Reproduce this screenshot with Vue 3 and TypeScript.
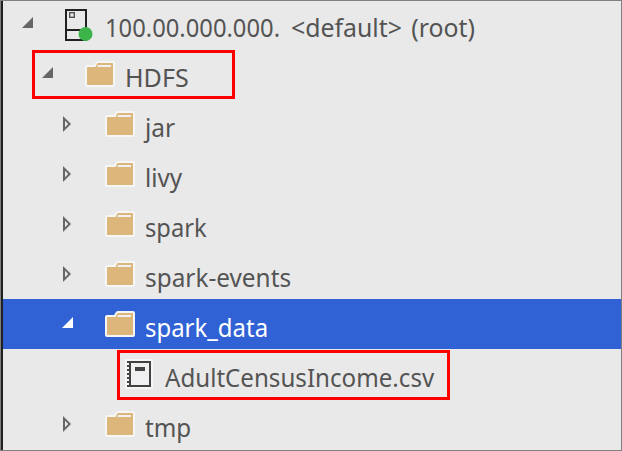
<script setup lang="ts">
type Kind = 'server' | 'folder' | 'file'
interface Node {
  name: string
  suffix?: string
  kind: Kind
  depth: number
  state?: 'open' | 'closed'
  selected?: boolean
  mark?: 'hdfs' | 'csv'
  cls: string
}
const nodes: Node[] = [
  { name: '100.00.000.000.', suffix: '<default> (root)', kind: 'server', depth: 0, state: 'open', cls: 'host' },
  { name: 'HDFS', kind: 'folder', depth: 1, state: 'open', mark: 'hdfs', cls: 'hdfs' },
  { name: 'jar', kind: 'folder', depth: 2, state: 'closed', cls: 'jar' },
  { name: 'livy', kind: 'folder', depth: 2, state: 'closed', cls: 'livy' },
  { name: 'spark', kind: 'folder', depth: 2, state: 'closed', cls: 'spark' },
  { name: 'spark-events', kind: 'folder', depth: 2, state: 'closed', cls: 'events' },
  { name: 'spark_data', kind: 'folder', depth: 2, state: 'open', selected: true, cls: 'data' },
  { name: 'AdultCensusIncome.csv', kind: 'file', depth: 3, mark: 'csv', cls: 'csv' },
  { name: 'tmp', kind: 'folder', depth: 2, state: 'closed', cls: 'tmp' },
]
</script>

<template>
  <div class="panel">
    <div class="tree" role="tree">
      <div
        v-for="n in nodes"
        :key="n.name"
        class="row"
        :class="['depth-' + n.depth, { selected: n.selected }]"
        role="treeitem"
      >
        <span class="toggle">
          <svg v-if="n.state === 'open'" class="arrow" width="12" height="12" viewBox="0 0 12 12">
            <path d="M11 0V11H0Z" fill="currentColor" />
          </svg>
          <svg v-else-if="n.state === 'closed'" class="arrow closed" width="12" height="16" viewBox="0 0 12 16">
            <path d="M1 0L9 8L1 16ZM3 4.8V11.2L6.2 8Z" fill="currentColor" fill-rule="evenodd" />
          </svg>
        </span>
        <span class="icon">
          <svg v-if="n.kind === 'folder'" class="folder" width="30" height="26" viewBox="0 0 30 26">
            <path d="M2 4H9L11 1Q11.6 0 13 0H28Q30 0 30 2V24Q30 26 28 26H2Q0 26 0 24V6Q0 4 2 4Z" fill="#f6f6f6" />
            <path d="M2.5 6H10.5L12.5 2H27.5L28 2.5V23.5L27.5 24H2.5L2 23.5V6.5Z" fill="#dcb67a" />
            <path d="M13 4H26V6H12.3Z" fill="#f0eff1" />
          </svg>
          <svg v-else-if="n.kind === 'server'" class="server" width="28" height="32" viewBox="0 0 28 32">
            <path d="M1 1H21V31H1ZM1 21H21" fill="none" stroke="#212121" stroke-width="2" />
            <rect x="4.7" y="3.7" width="4.6" height="4.6" fill="none" stroke="#555" stroke-width="1.4" />
            <circle cx="20.5" cy="25" r="7" fill="#3cb44a" />
          </svg>
          <svg v-else class="file" width="28" height="30" viewBox="0 0 28 30">
            <path d="M0 0H28V30H0Z" fill="#f6f6f6" />
            <path d="M5 3H25V27H5Z" fill="#f0eff1" />
            <path
              d="M2 2H26V28H2V26H4V24H2V22H4V20H2V18H4V16H2V14H4V12H2V10H4V8H2V6H4V4H2ZM6 4V26H24V4Z"
              fill="#424242"
              fill-rule="evenodd"
            />
            <path d="M10 8H20V12H10Z" fill="#424242" />
          </svg>
        </span>
        <span class="label" :class="n.cls">{{ n.name }}</span>
        <span v-if="n.suffix" class="label suffix">{{ n.suffix }}</span>
        <span v-if="n.mark" class="mark" :class="'mark-' + n.mark"></span>
      </div>
    </div>
  </div>
</template>

<style>
body {
  margin: 0;
  overflow: hidden;
}
</style>

<style scoped>
.panel {
  box-sizing: border-box;
  width: 622px;
  height: 451px;
  border: 1px solid #808080;
  background: #e9e9e9;
  overflow: hidden;
}
.tree {
  display: flex;
  flex-direction: column;
  box-sizing: border-box;
  height: 449px;
  border-left: 2px solid #202020;
}
.row {
  position: relative;
  box-sizing: border-box;
  display: flex;
  flex: none;
  align-items: flex-start;
  height: 50px;
  color: #545454;
}
.row:first-child {
  margin-top: -2px;
}
.depth-0 { padding-left: 19px; }
.depth-1 { padding-left: 39px; }
.depth-2 { padding-left: 59px; }
.depth-3 { padding-left: 79px; }
.selected {
  background: #3062d6;
  color: #fff;
}
.toggle {
  flex: none;
  width: 43px;
  color: #666;
}
.selected .toggle { color: #fff; }
.arrow {
  display: block;
  margin-top: 18px;
}
.arrow.closed { margin-top: 17px; }
.icon {
  flex: none;
  width: 40px;
}
.icon svg { display: block; }
.folder { margin-top: 12px; }
.server { margin-top: 10px; }
.file { margin-top: 10px; }
.label {
  flex: none;
  margin-top: 10px;
  font: 26px/36px "Noto Sans", "Open Sans", sans-serif;
  white-space: pre;
  transform-origin: 0 0;
}
.host { transform: scaleX(0.914); }
.hdfs { transform: scaleX(0.965); }
.jar { transform: scaleX(0.94); }
.livy { transform: scaleX(0.93); }
.spark { transform: scaleX(0.91); }
.events { transform: scaleX(0.937); }
.data { transform: scaleX(0.92); }
.csv { transform: scaleX(0.928); }
.tmp { transform: scaleX(0.93); }
.suffix {
  margin-left: -5px;
  word-spacing: 3px;
  transform: scaleX(0.955);
}
.mark {
  position: absolute;
  box-sizing: border-box;
  border: 3px solid #f00;
}
.mark-hdfs {
  left: 29px;
  top: 1px;
  width: 203px;
  height: 49px;
}
.mark-csv {
  left: 114px;
  top: 1px;
  width: 333px;
  height: 50px;
}
</style>
